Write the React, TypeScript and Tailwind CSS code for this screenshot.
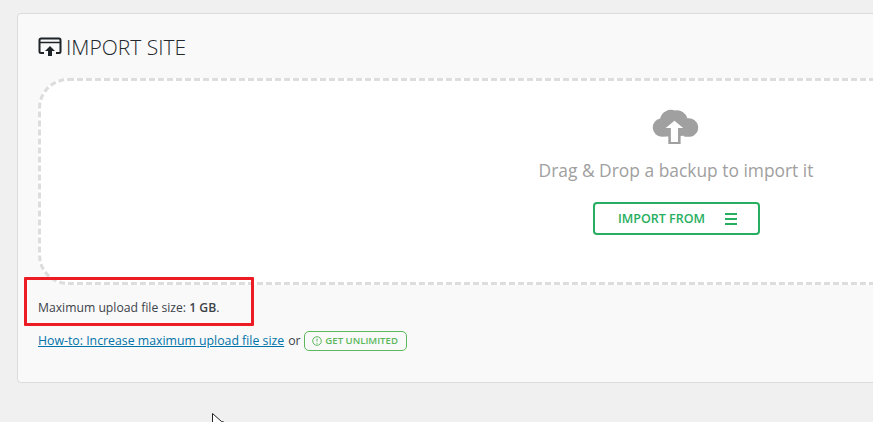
export default function App() {
  const font = { fontFamily: '"Open Sans", sans-serif' };
  return (
    <div style={font} className="relative h-[422px] w-[873px] overflow-hidden bg-[#f0f0f0] pl-[17px] pt-[13px]">
      <div className="h-[370px] w-[1320px] rounded-[4px] border border-[#dcdcdc] bg-[#f9f9f9] pl-[20px] pr-[21px] pt-[19px]">
        <div className="flex h-[28px] items-center gap-[4px]">
          <svg width="24" height="20" viewBox="0 0 24 20" className="shrink-0">
            <path d="M6 16H3a1.5 1.5 0 0 1-1.5-1.5V3A1.5 1.5 0 0 1 3 1.5h18A1.5 1.5 0 0 1 22.500 3v11.500A1.500 1.500 0 0 1 21 16h-3" fill="none" stroke="#1d2327" strokeWidth="2" />
            <path d="M2 5.500h20" stroke="#1d2327" strokeWidth="1.500" />
            <path d="M12 9l5 5h-3v5h-4v-5H7z" fill="#1d2327" />
          </svg>
          <h1 className="text-[21px] font-light leading-none text-[#23282d]">IMPORT SITE</h1>
        </div>
        <div className="mt-[17px] flex h-[207px] w-[1276px] flex-col items-center rounded-[30px] border-[3px] border-dashed border-[#dddddd] bg-white pt-[26px]">
          <svg width="50" height="39" viewBox="2 0 46 38">
            <path d="M11 29a9 9 0 0 1-1.500-17.800A11 11 0 0 1 24 3.500 10 10 0 0 1 36 11a9 9 0 0 1 3 18h-6v-1z" fill="#a0a0a0" />
            <path d="M23.500 10.500L36 21.500h-6.500V36h-12V21.500H11z" fill="#a0a0a0" />
            <path d="M23.500 13.500L32 20.500h-5V34h-7V20.500h-5z" fill="#ffffff" />
          </svg>
          <p className="mt-[12px] text-[17.400px] leading-[24px] text-[#a0a0a0]">Drag &amp; Drop a backup to import it</p>
          <button className="mt-[20px] flex h-[33px] w-[167px] items-center justify-center gap-[20px] rounded-[4px] border-2 border-[#27ae60] pl-[3px] text-[12.500px] font-semibold text-[#27ae60]">
            <span className="pt-[2px]">IMPORT FROM</span>
            <span className="flex w-[12px] flex-col gap-[3px]">
              <span className="h-[2px] bg-[#27ae60]" />
              <span className="h-[2px] bg-[#27ae60]" />
              <span className="h-[2px] bg-[#27ae60]" />
            </span>
          </button>
        </div>
        <p className="mt-[13px] text-[12.200px] leading-[20px] text-[#3c434a]">Maximum upload file size: <strong className="font-semibold">1 GB</strong>.</p>
        <div className="mt-[13px] flex h-[20px] items-center text-[12.300px] text-[#3c434a]">
          <a className="text-[#0073aa] underline">How-to: Increase maximum upload file size</a>
          <span className="ml-[4px]">or</span>
          <span className="ml-[3px] flex h-[20px] w-[103px] items-center justify-center gap-[3px] rounded-[5px] border border-[#5cb85c] text-[9.600px] font-semibold text-[#5cb85c]">
            <svg width="10" height="10" viewBox="0 0 10 10"><circle cx="5" cy="5" r="4.300" fill="none" stroke="#5cb85c" /><path d="M5 2.500v3M5 6.800v1" stroke="#5cb85c" /></svg>
            GET UNLIMITED
          </span>
        </div>
      </div>
      <div className="absolute left-[24px] top-[277px] h-[49px] w-[230px] rounded-[1px] border-[3px] border-[#ed1c24]" />
      <svg className="absolute left-[212px] top-[413px]" width="12" height="9" viewBox="0 0 12 9">
        <path d="M.5.500v12l3-3 2 4 8-4-4-1z" fill="#fff" stroke="#222" />
      </svg>
    </div>
  );
}
